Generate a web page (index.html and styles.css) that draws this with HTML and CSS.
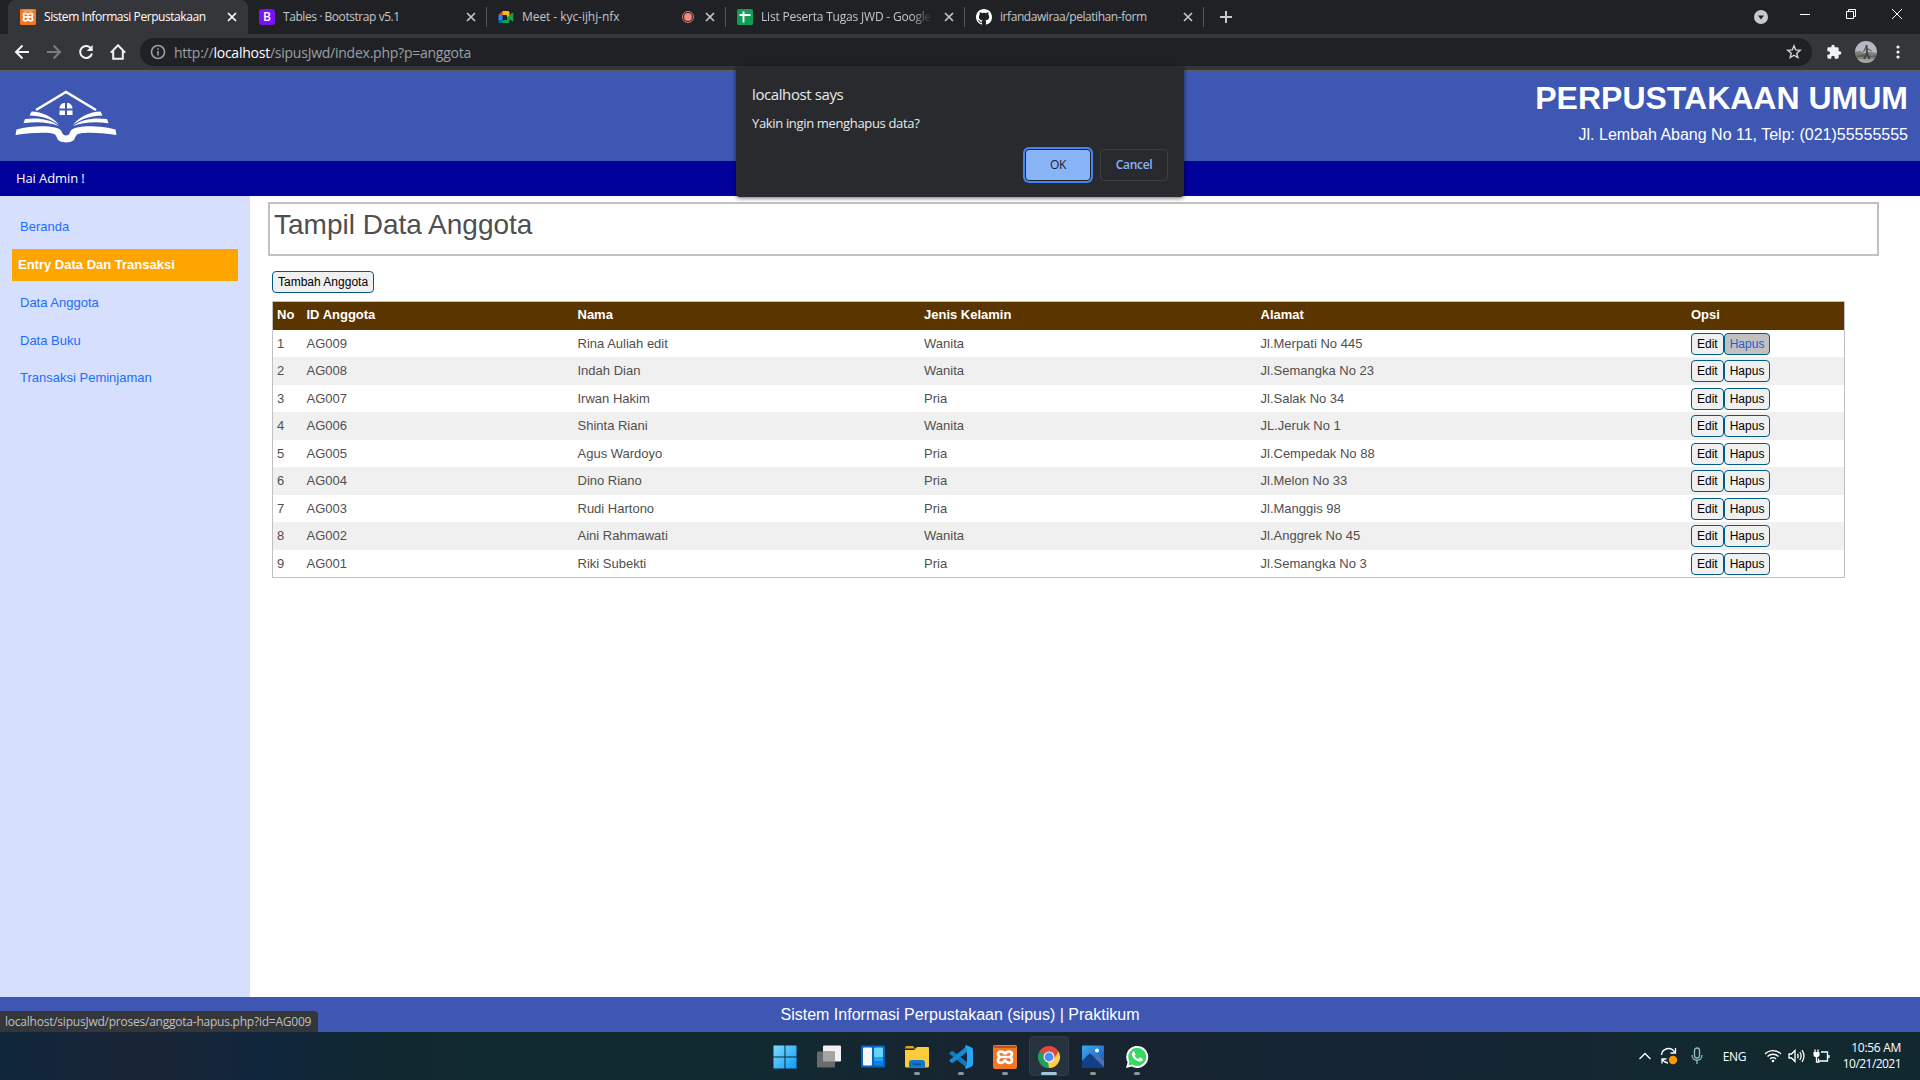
FILE: index.html
```html
<!DOCTYPE html>
<html lang="id">
<head>
<meta charset="utf-8">
<title>Sistem Informasi Perpustakaan</title>
<link rel="stylesheet" href="styles.css">
</head>
<body>
<header class="browser">
  <div class="tabstrip">
    <div class="tab tab-active">
      <svg class="favicon" viewBox="0 0 24 24"><rect width="24" height="24" rx="2" fill="#f37623"/><path d="M5 3h14" stroke="#ffc08a" stroke-width="1.5"/><g fill="none" stroke="#fff" stroke-width="2.7"><path d="M12 9.500C11 6 5 5.500 5 9c0 2 1 2.500 2.500 3C6 12.500 5 13 5 15.500c0 3.500 6 3 7-1M12 9.500c1-3.500 7-4 7-.5 0 2-1 2.500-2.500 3 1.500.5 2.500 1 2.500 3.500 0 3.500-6 3-7-1M9 12h6"/></g></svg>
      <span class="tab-title">Sistem Informasi Perpustakaan</span>
      <svg class="tab-close" viewBox="0 0 12 12"><path d="M2 2l8 8M10 2l-8 8"/></svg>
    </div>
    <div class="tab">
      <svg class="favicon" viewBox="0 0 16 16"><rect width="16" height="16" rx="3" fill="#7a12f7"/><text class="b-mark" x="8" y="12.400" text-anchor="middle">B</text></svg>
      <span class="tab-title">Tables · Bootstrap v5.1</span>
      <svg class="tab-close" viewBox="0 0 12 12"><path d="M2 2l8 8M10 2l-8 8"/></svg>
    </div>
    <div class="tab">
      <svg class="favicon" viewBox="0 0 16 16"><path d="M4.500 2v4H.5z" fill="#ea4335"/><path d="M.5 6h4v5h-4z" fill="#2684fc"/><path d="M.5 11h4v3H2q-1.500 0-1.500-1.500z" fill="#0066da"/><path d="M4.500 2H10q1.500 0 1.500 1.500V7L9 8.500V6H4.500z" fill="#ffba00"/><path d="M4.500 11H9V8.500l2.500-1V12.500Q11.500 14 10 14H4.500z" fill="#00ac47"/><path d="M9 8.500l5-4.500q1.300-.8 1.300.6v7q0 1.300-1.200.5z" fill="#1e9e4a"/></svg>
      <span class="tab-title tab-wide">Meet - kyc-ijhj-nfx</span>
      <svg class="tab-rec" viewBox="0 0 12 12"><circle cx="6" cy="6" r="5.500" fill="none" stroke="#f28b82" stroke-width=".9"/><circle cx="6" cy="6" r="3.900" fill="#f28b82"/></svg>
      <svg class="tab-close" viewBox="0 0 12 12"><path d="M2 2l8 8M10 2l-8 8"/></svg>
    </div>
    <div class="tab">
      <svg class="favicon" viewBox="0 0 16 16"><rect width="16" height="16" rx="1.500" fill="#0f9d58"/><path d="M2.500 6h11M6.500 2.500v11" stroke="#fff" stroke-width="1.900"/></svg>
      <span class="tab-title tab-fade">List Peserta Tugas JWD - Google S</span>
      <svg class="tab-close" viewBox="0 0 12 12"><path d="M2 2l8 8M10 2l-8 8"/></svg>
    </div>
    <div class="tab">
      <svg class="favicon" viewBox="0 0 16 16"><path fill="#fff" d="M8 0C3.580 0 0 3.580 0 8c0 3.540 2.290 6.530 5.470 7.590.4.070.55-.17.55-.38 0-.19-.01-.82-.01-1.490-2.010.37-2.530-.49-2.690-.94-.09-.23-.48-.94-.82-1.130-.28-.15-.68-.52-.01-.53.63-.01 1.080.58 1.230.82.72 1.210 1.870.87 2.330.66.070-.52.28-.87.51-1.070-1.780-.2-3.640-.89-3.640-3.950 0-.87.31-1.590.82-2.150-.08-.2-.36-1.020.080-2.120 0 0 .67-.21 2.200.82.64-.18 1.320-.27 2-.27s1.360.09 2 .27c1.530-1.040 2.200-.82 2.200-.82.44 1.100.16 1.920.08 2.120.51.56.82 1.270.82 2.150 0 3.070-1.870 3.750-3.650 3.950.29.25.54.73.54 1.480 0 1.070-.01 1.930-.01 2.200 0 .21.15.46.55.38A8 8 0 0 0 16 8c0-4.420-3.580-8-8-8z"/></svg>
      <span class="tab-title">irfandawiraa/pelatihan-form</span>
      <svg class="tab-close" viewBox="0 0 12 12"><path d="M2 2l8 8M10 2l-8 8"/></svg>
    </div>
    <svg class="new-tab" viewBox="0 0 14 14"><path d="M7 1v12M1 7h12"/></svg>
    <div class="window-controls">
      <svg width="14" height="14" viewBox="0 0 14 14" class="tab-search"><circle cx="7" cy="7" r="7" fill="#c6c9cd"/><path d="M4 5.500h6L7 9.500z" fill="#202124"/></svg>
      <svg width="12" height="12" viewBox="0 0 12 12"><path d="M1 6.500h10"/></svg>
      <svg width="12" height="12" viewBox="0 0 12 12"><path d="M1.500 3.500h7v7h-7zM3.500 3.500v-2h7v7h-2"/></svg>
      <svg width="12" height="12" viewBox="0 0 12 12"><path d="M1 1l10 10M11 1L1 11"/></svg>
    </div>
  </div>
  <div class="toolbar">
    <svg class="nav-icon" viewBox="0 0 16 16"><path d="M15 8H2M8.500 1.500L2 8l6.500 6.500"/></svg>
    <svg class="nav-icon nav-dim" viewBox="0 0 16 16"><path d="M1 8h13M7.500 1.500L14 8l-6.500 6.500"/></svg>
    <svg class="nav-icon" viewBox="0 0 16 16"><path d="M13.300 4.800A6 6 0 1 0 14 9.500"/><path d="M14.700 1v6H8.700z" fill="#f1f3f4" stroke="none"/></svg>
    <svg class="nav-icon" viewBox="0 0 16 16"><path d="M.8 8.600L8 1.300l7.200 7.300M3.200 7v7.700h9.600V7"/></svg>
    <div class="omnibox">
      <svg width="16" height="16" viewBox="0 0 16 16" class="info"><circle cx="8" cy="8" r="6.500"/><path d="M8 7v4.500M8 4.200v1.600"/></svg>
      <span class="url">http://<b>localhost</b>/sipusJwd/index.php?p=anggota</span>
      <svg width="16" height="16" viewBox="0 0 16 16" class="star"><path d="M8 1.800l1.700 4.100 4.500.4-3.400 2.900 1 4.300L8 11.200l-3.800 2.300 1-4.300-3.400-2.900 4.500-.4z"/></svg>
    </div>
    <svg class="puzzle" viewBox="0 0 24 24"><path d="M20.500 11H19V7a2 2 0 0 0-2-2h-4V3.500a2.500 2.500 0 0 0-5 0V5H4a2 2 0 0 0-2 2v3.800h1.500a2.700 2.700 0 0 1 0 5.400H2V20a2 2 0 0 0 2 2h3.800v-1.500a2.700 2.700 0 0 1 5.400 0V22H17a2 2 0 0 0 2-2v-4h1.500a2.500 2.500 0 0 0 0-5z"/></svg>
    <svg class="avatar" viewBox="0 0 22 22"><defs><clipPath id="round"><circle cx="11" cy="11" r="11"/></clipPath></defs><g clip-path="url(#round)"><path fill="#b4b8c0" d="M0 0h22v12H0z"/><path fill="#7d8179" d="M0 11l5-1 4 2 6-1 7 1v10H0z"/><path fill="#5b6352" d="M0 15l8-2 8 2 6-1v2H0z"/><path fill="#a5a69b" d="M0 18h22v4H0z"/><path stroke="#45474b" stroke-width="2" fill="none" d="M11.500 4l.5 8-3 6M12 12l2.500 6"/><path stroke="#45474b" fill="none" d="M8.500 11l2-4.500 6 3.500"/></g></svg>
    <svg class="kebab" viewBox="0 0 4 14"><circle cx="2" cy="2" r="1.600"/><circle cx="2" cy="7" r="1.600"/><circle cx="2" cy="12" r="1.600"/></svg>
  </div>
</header>

<div class="page">
  <div class="banner">
    <svg class="logo" viewBox="0 0 102 54">
      <path d="M21 20L51 2l30 18" fill="none" stroke="#fff" stroke-width="2.600"/>
      <path d="M50 13v5.500h-5.500C44.500 15 47 13 50 13zM52 13v5.500h5.500C57.500 15 55 13 52 13zM44.500 20.500H50v4.500h-5.500zM52 20.500h5.500v4.500H52z"/>
      <path d="M16.500 21.500C27 21.500 38 27 44 35 36 29 26 25.500 14.500 25.500zM85.500 21.500C75 21.500 64 27 58 35c8-6 18-9.500 29.500-9.500z"/>
      <path d="M10 29c13-1.500 25 0 34 7-11-4-22-4.500-35.500-2.800zM92 29c-13-1.500-25 0-34 7 11-4 22-4.500 35.500-2.800z"/>
      <path d="M1.500 39.500C15 36 30 35.500 40 37.500c5 1 6.500 3 7.500 6 .8 2.500 6.200 2.500 7 0 1-3 2.500-5 7.500-6 10-2 25-1.500 38.500 2l1 5.500c-15-2-28-2.800-36.500-1.500-3.500.5-4 2-5.500 5.500-2 4.500-15 4.500-17 0-1.500-3.500-2-5-5.500-5.500C28.500 42.200 15.500 43 .5 45z"/>
    </svg>
    <div class="banner-text">
      <h1>PERPUSTAKAAN UMUM</h1>
      <p>Jl. Lembah Abang No 11, Telp: (021)55555555</p>
    </div>
  </div>
  <div class="greeting"><span>Hai Admin !</span></div>
  <div class="columns">
    <nav class="sidebar">
      <a class="home-link">Beranda</a>
      <h2>Entry Data Dan Transaksi</h2>
      <a>Data Anggota</a>
      <a>Data Buku</a>
      <a>Transaksi Peminjaman</a>
    </nav>
    <main class="content">
      <div class="title-box"><span>Tampil Data Anggota</span></div>
      <a class="btn btn-add">Tambah Anggota</a>
      <table class="members">
        <colgroup><col class="c-no"><col class="c-id"><col class="c-name"><col class="c-sex"><col class="c-address"><col></colgroup>
        <thead><tr><th>No</th><th>ID Anggota</th><th>Nama</th><th>Jenis Kelamin</th><th>Alamat</th><th>Opsi</th></tr></thead>
        <tbody>
          <tr><td>1</td><td>AG009</td><td>Rina Auliah edit</td><td>Wanita</td><td>Jl.Merpati No 445</td><td><div class="actions"><a class="btn">Edit</a><a class="btn btn-hover">Hapus</a></div></td></tr>
          <tr><td>2</td><td>AG008</td><td>Indah Dian</td><td>Wanita</td><td>Jl.Semangka No 23</td><td><div class="actions"><a class="btn">Edit</a><a class="btn">Hapus</a></div></td></tr>
          <tr><td>3</td><td>AG007</td><td>Irwan Hakim</td><td>Pria</td><td>Jl.Salak No 34</td><td><div class="actions"><a class="btn">Edit</a><a class="btn">Hapus</a></div></td></tr>
          <tr><td>4</td><td>AG006</td><td>Shinta Riani</td><td>Wanita</td><td>JL.Jeruk No 1</td><td><div class="actions"><a class="btn">Edit</a><a class="btn">Hapus</a></div></td></tr>
          <tr><td>5</td><td>AG005</td><td>Agus Wardoyo</td><td>Pria</td><td>Jl.Cempedak No 88</td><td><div class="actions"><a class="btn">Edit</a><a class="btn">Hapus</a></div></td></tr>
          <tr><td>6</td><td>AG004</td><td>Dino Riano</td><td>Pria</td><td>Jl.Melon No 33</td><td><div class="actions"><a class="btn">Edit</a><a class="btn">Hapus</a></div></td></tr>
          <tr><td>7</td><td>AG003</td><td>Rudi Hartono</td><td>Pria</td><td>Jl.Manggis 98</td><td><div class="actions"><a class="btn">Edit</a><a class="btn">Hapus</a></div></td></tr>
          <tr><td>8</td><td>AG002</td><td>Aini Rahmawati</td><td>Wanita</td><td>Jl.Anggrek No 45</td><td><div class="actions"><a class="btn">Edit</a><a class="btn">Hapus</a></div></td></tr>
          <tr><td>9</td><td>AG001</td><td>Riki Subekti</td><td>Pria</td><td>Jl.Semangka No 3</td><td><div class="actions"><a class="btn">Edit</a><a class="btn">Hapus</a></div></td></tr>
        </tbody>
      </table>
    </main>
  </div>
  <footer class="footer"><span>Sistem Informasi Perpustakaan (sipus) | Praktikum</span></footer>
  <div class="status-bubble"><span>localhost/sipusJwd/proses/anggota-hapus.php?id=AG009</span></div>
</div>

<div class="taskbar">
  <div class="apps">
    <div class="app"><svg viewBox="0 0 24 24"><defs><linearGradient id="win" x1="0" y1="0" x2="1" y2="1"><stop offset="0" stop-color="#7fdcff"/><stop offset="1" stop-color="#0a9bf5"/></linearGradient></defs><path fill="url(#win)" d="M.5 .5h11v11H.5zM12.500 .5h11v11h-11zM.5 12.500h11v11H.5zM12.500 12.500h11v11h-11z"/></svg></div>
    <div class="app"><svg viewBox="0 0 24 24"><rect x="6" y=".5" width="18" height="16" rx="1" fill="#f2f2f2"/><rect x="0" y="6.500" width="18" height="16" rx="1" fill="#6b6b6b"/><path d="M6 6.500h12v10H6z" fill="#a5a5a5"/></svg></div>
    <div class="app"><svg viewBox="0 0 24 24"><rect y=".5" width="24" height="22" rx="1" fill="#0a63bd"/><rect x="2" y="2.500" width="9" height="18" rx="1" fill="#f5f8fb"/><rect x="13" y="2.500" width="9" height="10" rx="1" fill="#66d3fb"/><rect x="13" y="12.500" width="9" height="4" fill="#1fa3f5"/><rect x="13" y="16" width="9" height="4.500" rx="1" fill="#0d82e5"/></svg></div>
    <div class="app"><svg viewBox="0 0 24 24"><path d="M0 3q0-2 2-2h6l2 2.500H0z" fill="#e8a30c"/><path d="M0 5h9l3-3h11q1 0 1 1v18q0 1.500-1.500 1.500h-21Q0 22.500 0 21z" fill="#fdcb3e"/><path d="M4 22.500V18q0-3 3-3h10q3 0 3 3v4.500z" fill="#1475cc"/><path d="M8 18.500h8v1.500H8z" fill="#0b4f94"/></svg><i></i></div>
    <div class="app"><svg viewBox="0 0 24 24"><path d="M0 8.500L2.500 6 4 6.200 18 17v6z" fill="#0f7ac0"/><path d="M0 15.500L2.500 18 4 17.800 18 7V1z" fill="#1589d1"/><path d="M17 0l5.500 2.500q1.500.7 1.500 2v15q0 1.300-1.500 2L17 24l-1-1.500L18 20V4l-2-2.500z" fill="#29a5f3"/></svg><i></i></div>
    <div class="app"><svg viewBox="0 0 24 24"><rect width="24" height="24" rx="2" fill="#f37623"/><path d="M1 1h22v2H1z" fill="#b9551c"/><g fill="none" stroke="#fff" stroke-width="2.700"><path d="M12 9.500C11 6 5 5.500 5 9c0 2 1 2.500 2.500 3C6 12.500 5 13 5 15.500c0 3.500 6 3 7-1M12 9.500c1-3.500 7-4 7-.5 0 2-1 2.500-2.500 3 1.500.5 2.500 1 2.500 3.500 0 3.500-6 3-7-1M9 12h6"/></g></svg><i></i></div>
    <div class="app app-current"><svg viewBox="0 0 24 24"><path d="M12 12L2.470 6.500A11 11 0 0 1 21.530 6.500z" fill="#de4a3d"/><path d="M12 12L12 23A11 11 0 0 1 2.470 6.500z" fill="#1fa15d"/><path d="M12 12l9.530-5.500A11 11 0 0 1 12 23z" fill="#ffce45"/><path d="M12 6.500h9.530L17 14zM7.200 14.800L2.470 6.500 11 7z" fill="#de4a3d"/><path d="M7.200 14.800L2.470 6.500l5 2.500z" fill="#1fa15d"/><path d="M16.800 14.800L12 23l-1-6z" fill="#ffce45"/><circle cx="12" cy="12" r="5.500" fill="#f4f7ff"/><circle cx="12" cy="12" r="4.400" fill="#4c8bf5"/></svg><i></i></div>
    <div class="app"><svg viewBox="0 0 24 24"><defs><linearGradient id="sky" x1="0" y1="0" x2="1" y2="1"><stop offset="0" stop-color="#3fa9f5"/><stop offset="1" stop-color="#174fae"/></linearGradient></defs><rect x="1" y=".5" width="22" height="22" rx="1" fill="url(#sky)"/><path d="M1 16l7-7q1-1 2 0l13 13q0 .5-1 .5H2q-1 0-1-1z" fill="#123f87"/><path d="M13 12l2-2q1-1 2 0l6 6v6z" fill="#526fae"/><circle cx="16" cy="5.500" r="2" fill="#fff"/></svg><i></i></div>
    <div class="app"><svg viewBox="0 0 24 24"><path fill="#fff" d="M1 23l1.600-5.800A11 11 0 1 1 6.700 21.400z"/><path fill="#38d75f" d="M3.500 20.500l1-4A9 9 0 1 1 7.400 19.500z"/><path fill="#fff" d="M8.200 6.600q.8-.5 1.300.3l1 2.200q.2.500-.9 1.600c.8 1.600 2 2.700 3.700 3.400l1.200-1.400q.4-.4.900-.1l2 1q.6.300.4 1c-.4 1.700-2.300 2.300-3.800 1.900-3.500-.9-6-3.300-7.200-6.200-.4-1.400.2-2.900 1.400-3.700z"/></svg><i></i></div>
  </div>
  <div class="tray">
    <svg width="14" height="12" viewBox="0 0 14 12"><path d="M1.500 9L7 3.500 12.500 9"/></svg>
    <svg class="sync" width="18" height="18" viewBox="0 0 18 18"><path d="M1.500 8A7 7 0 0 1 14.500 5M15.500 1v5h-5M2 16.500v-4.500h4.500M2.500 12.500A7 7 0 0 0 8 16"/><circle cx="13" cy="13" r="4.200" fill="#ff9800" stroke="none"/></svg>
    <svg class="mic" width="12" height="18" viewBox="0 0 12 18"><rect x="3.500" y="1" width="5" height="10" rx="2.500"/><path d="M1 8c0 7 10 7 10 0M6 13.500V17"/></svg>
    <span class="lang">ENG</span>
    <svg class="wifi" width="18" height="14" viewBox="0 0 18 14"><path d="M1 5c4.500-4.500 11.500-4.500 16 0M3.500 7.500c3-3 8-3 11 0M6 10c1.700-1.700 4.300-1.700 6 0"/><circle cx="9" cy="12" r="1.300" fill="#fff" stroke="none"/></svg>
    <svg class="sound" width="17" height="14" viewBox="0 0 17 14"><path d="M1 5h2.500L7 1.500v11L3.500 9H1zM9.500 4.800q1.300 2.200 0 4.400M11.800 3q2.700 4 0 8M14 1.200q4 5.800 0 11.600"/></svg>
    <svg class="battery" width="17" height="14" viewBox="0 0 17 14"><path d="M8 3h6.500v9H5.500V9.500M16 6v3M2 .5v3M5 .5v3"/><path d="M.5 3h6v3q0 2-3 2t-3-2z" fill="#fff" stroke="none"/><path d="M3.500 7v6h3"/></svg>
    <div class="clock"><span>10:56 AM</span><span>10/21/2021</span></div>
  </div>
</div>

<div class="dialog">
  <h3>localhost says</h3>
  <p>Yakin ingin menghapus data?</p>
  <div class="dialog-actions"><button class="ok">OK</button><button class="cancel">Cancel</button></div>
</div>
</body>
</html>
```
FILE: styles.css
```css
* { box-sizing: border-box; }
body { margin: 0; width: 1920px; height: 1080px; overflow: hidden; display: flex; flex-direction: column; font-family: "Liberation Sans", Arial, sans-serif; position: relative; background: #fff; }
svg { display: block; flex: none; }
h1, h2, h3, p { margin: 0; }

/* Browser window */
.browser { font-family: "Open Sans", "Noto Sans", sans-serif; height: 71px; background: #35363a; border-bottom: 1px solid #5c5d61; }
.tabstrip { height: 34px; background: #202124; display: flex; align-items: center; padding-left: 8px; }
.tab { width: 239px; height: 20px; padding: 0 9px 0 11px; display: flex; align-items: center; color: #c3c6ca; font-size: 12px; border-right: 1px solid #55565a; }
.tab-active { width: 240px; height: 34px; padding: 0 10px 0 12px; background: #35363a; border: 0; border-radius: 8px 8px 0 0; color: #fff; }
.favicon { width: 16px; height: 16px; margin-right: 8px; }
.b-mark { font: 600 12px "Open Sans", sans-serif; fill: #fff; }
.tab-title { flex: 1; overflow: hidden; white-space: nowrap; letter-spacing: -0.44px; padding-bottom: 1px; }
.tab-wide { letter-spacing: -0.06px; }
.tab-fade { margin-right: 11px; letter-spacing: -0.2px; -webkit-mask-image: linear-gradient(to right, #000 88%, transparent); mask-image: linear-gradient(to right, #000 88%, transparent); }
.tab-close { width: 12px; height: 12px; fill: none; stroke: #c3c6ca; stroke-width: 1.7; }
.tab-active .tab-close { stroke: #fff; }
.tab-rec { width: 12px; height: 12px; margin-right: 10px; }
.new-tab { width: 14px; height: 14px; margin-left: 15px; stroke: #c8cacd; stroke-width: 2; }
.window-controls { margin-left: auto; padding-right: 17px; display: flex; align-items: center; gap: 34px; }
.window-controls svg { fill: none; stroke: #fff; stroke-width: 1; margin-top: -6px; }
.window-controls .tab-search { stroke: none; margin: 0 -3px 0 0; }

.toolbar { height: 36px; display: flex; align-items: center; padding: 0 20px 0 14px; }
.nav-icon { width: 16px; height: 16px; margin-right: 16px; fill: none; stroke: #f1f3f4; stroke-width: 2; }
.nav-dim { stroke: #7c7d80; }
.omnibox { flex: none; width: 1672px; height: 28px; border-radius: 14px; background: #202124; margin-left: -2px; padding: 0 10px; display: flex; align-items: center; }
.info { fill: none; stroke: #9aa0a6; stroke-width: 1.6; }
.url { margin-left: 8px; flex: 1; font-size: 14px; color: #9aa0a6; letter-spacing: -0.24px; }
.url b { font-weight: 400; color: #fff; }
.star { fill: none; stroke: #d5d7da; stroke-width: 1.4; }
.puzzle { width: 16px; height: 16px; margin-left: 14px; fill: #f1f3f4; }
.avatar { width: 22px; height: 22px; margin-left: 13px; }
.kebab { width: 4px; height: 14px; margin-left: auto; fill: #f1f3f4; }

/* Library page */
.page { height: 961px; position: relative; display: flex; flex-direction: column; }
.banner { height: 90px; background: #3e57b3; display: flex; justify-content: space-between; padding: 18.5px 12px 0 14.500px; color: #fff; }
.logo { width: 102px; height: 54px; fill: #fff; }
.banner-text { text-align: right; margin-top: -9.5px; }
h1 { font-size: 32px; line-height: 37px; }
.banner p { font-size: 16px; line-height: 18px; margin-top: 9px; }
.greeting { height: 35px; background: #00009b; color: #fff; font: 13px "Open Sans", sans-serif; letter-spacing: -0.1px; display: flex; align-items: center; padding: 0 0 1px 16px; }
.columns { height: 801px; display: flex; }
.sidebar { width: 250px; background: #d7dfff; padding: 15px 12px 0; font-size: 13px; }
.sidebar a { display: flex; align-items: center; height: 32px; margin-bottom: 5.7px; padding-left: 8px; color: #1a6dff; }
.sidebar .home-link { padding-bottom: 2px; }
.sidebar h2 { display: flex; align-items: center; height: 32px; margin-bottom: 5.7px; padding-left: 6px; background: #ffa500; color: #fff; font-size: 13px; }
.content { flex: 1; padding: 6px 41px 0 18px; color: #4f4f4f; }
.title-box { height: 54px; border: 2px solid #c1c1c1; padding: 4px 4px 0; font-size: 28px; line-height: 34px; }
.btn { height: 22px; display: inline-flex; align-items: center; padding: 0 5px; border: 1px solid #005c84; border-radius: 4px; background: #f0f0f0; color: #000; font-size: 12px; white-space: nowrap; }
.btn-hover { background: #c1c1c1; color: #1f5fd0; }
.btn-add { display: flex; width: 102px; margin: 15px 0 7.9px 4px; }
.members { width: 1573px; margin-left: 4px; table-layout: fixed; border-spacing: 0; border: 1px solid #c1c1c1; font-size: 13px; }
.c-no { width: 29.5px; } .c-id { width: 271px; } .c-name { width: 346.5px; } .c-sex { width: 336.5px; } .c-address { width: 430.5px; }
.members th, .members td { padding: 0 4px; text-align: left; height: 27.5px; vertical-align: middle; }
.members td:not(:last-child) { padding-bottom: 0.5px; }
.members th { height: 28px; padding-bottom: 2px; background: #5b3500; color: #fff; }
.members tbody tr:nth-child(even) { background: #f0f0f0; }
.actions { display: flex; }
.footer { height: 35px; background: #3e57b3; color: #fff; font-size: 16px; display: flex; align-items: center; justify-content: center; }
.status-bubble { position: absolute; left: 0; bottom: 0; width: 318px; height: 21px; padding-left: 5px; display: flex; align-items: center; background: #35363a; border-radius: 0 4px 0 0; color: #bdc1c6; font: 12px "Open Sans", sans-serif; letter-spacing: -0.23px; white-space: nowrap; }

/* Desktop taskbar */
.taskbar { height: 48px; position: relative; display: grid; grid-template-columns: 1fr auto 1fr; background: linear-gradient(to right, #10263a 0, #192536 150px, #10263c 260px, #11282f 400px, #102a32 720px, #182430 1000px, #142433 1400px, #122930 1700px, #12282f); color: #fff; font-family: "Open Sans", sans-serif; }
.apps { grid-column: 2; display: flex; padding-left: 2px; }
.app { width: 44px; height: 48px; display: flex; flex-direction: column; align-items: center; padding-top: 12.500px; }
.app svg { width: 24px; height: 24px; }
.app i { width: 6px; height: 3px; border-radius: 2px; background: #8f979d; margin-top: 3.500px; }
.app-current { width: 40px; height: 40px; margin: 4px 2px; padding-top: 8.500px; background: #26323e; border: 1px solid #303c48; border-radius: 4px; }
.app-current svg { margin-top: -1px; }
.app-current i { width: 16px; background: #9fc9da; margin-top: 3px; }
.tray { display: flex; align-items: center; justify-content: flex-end; padding-right: 19px; }
.tray svg { fill: none; stroke: #fff; stroke-width: 1.3; }
.sync { margin-left: 8px; }
.tray .mic { margin-left: 13px; stroke: #8fc0c4; }
.lang { font-size: 12px; margin-left: 20px; letter-spacing: -0.4px; }
.wifi { margin-left: 18px; }
.sound { margin-left: 6px; }
.battery { margin-left: 8px; }
.clock { width: 71px; display: flex; flex-direction: column; align-items: flex-end; font-size: 12px; line-height: 16px; letter-spacing: -0.55px; }
.clock span:first-child { letter-spacing: -0.3px; }

/* Confirmation dialog */
.dialog { position: absolute; left: 736px; top: 66px; width: 448px; height: 131px; padding: 19px 16px 0; background: #292a2d; border-radius: 4px; box-shadow: 0 1px 4px rgba(0, 0, 0, .6); color: #e8eaed; font-family: "Open Sans", sans-serif; }
.dialog h3 { font-size: 15px; font-weight: 400; line-height: 18px; letter-spacing: -0.4px; }
.dialog p { font-size: 13px; line-height: 18px; margin-top: 11px; letter-spacing: -0.34px; }
.dialog-actions { display: flex; justify-content: flex-end; gap: 9px; margin-top: 17px; }
.dialog button { height: 32px; border-radius: 4px; font: 600 12px "Open Sans", sans-serif; letter-spacing: -0.3px; padding: 0 0 1px; }
.dialog .ok { width: 66px; border: 1px solid #202124; background: #8ab4f8; color: #202124; box-shadow: 0 0 0 2px #4285f4; font-weight: 400; }
.dialog .cancel { width: 68px; border: 1px solid #3c4043; background: transparent; color: #8ab4f8; }
```
